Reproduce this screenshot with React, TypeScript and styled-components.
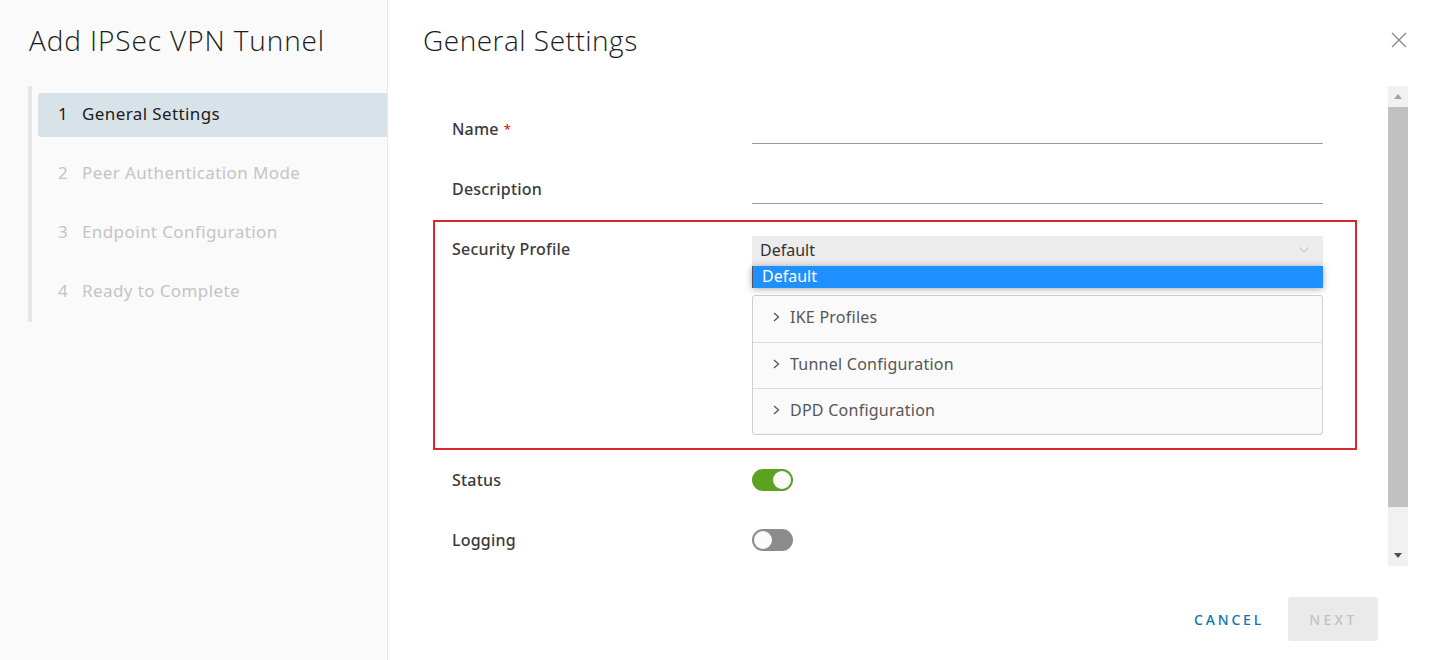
import React from "react";
import styled, { createGlobalStyle } from "styled-components";

const GlobalStyle = createGlobalStyle`
  html, body { margin: 0; padding: 0; background: #fff; }
  * { box-sizing: border-box; }
  body { font-family: "Noto Sans", "Open Sans", Arial, sans-serif; }
`;

const Page = styled.div`
  display: flex;
  width: 1429px;
  height: 660px;
  background: #fff;
  overflow: hidden;
`;

const Sidebar = styled.aside`
  width: 388px;
  flex: none;
  background: #fafafa;
  border-right: 1px solid #e8e8e8;
  padding: 22px 0 0 28px;
  display: flex;
  flex-direction: column;
`;

const Heading = styled.h1`
  margin: 0;
  font-family: "Open Sans", "Noto Sans", Arial, sans-serif;
  font-size: 28px;
  line-height: 36px;
  font-weight: 300;
  color: #1b1b1b;
  letter-spacing: 0.5px;
`;

const WizardTitle = styled(Heading)`
  margin-left: 1px;
  letter-spacing: 0.9px;
`;

const Nav = styled.nav`
  margin-top: 28px;
  border-left: 4px solid #e6e6e6;
  padding: 7px 0 8px 6px;
  display: flex;
  flex-direction: column;
  gap: 15px;
`;

const NavItem = styled.div<{ $active?: boolean }>`
  height: 44px;
  display: flex;
  align-items: center;
  padding: 0 0 3px 20px;
  border-radius: 3px 0 0 3px;
  background: ${(p) => (p.$active ? "#d8e3e9" : "transparent")};
  color: ${(p) => (p.$active ? "#1b1b1b" : "#c4c4c4")};
  font-size: 17px;
  letter-spacing: 0.4px;
`;

const StepNum = styled.span`
  width: 24px;
`;

const Main = styled.main`
  flex: 1;
  display: flex;
  flex-direction: column;
  padding: 22px 21px 0 35px;
`;

const Header = styled.header`
  display: flex;
  align-items: center;
  justify-content: space-between;
  height: 36px;
  flex: none;
`;

const CloseButton = styled.button`
  border: 0;
  background: none;
  padding: 0;
  margin-right: 1px;
  width: 16px;
  height: 16px;
  display: flex;
  cursor: pointer;
`;

const Body = styled.div`
  margin-top: 28px;
  height: 480px;
  flex: none;
  display: flex;
  overflow: hidden;
`;

const Form = styled.div`
  flex: 1;
  padding: 13px 0 0 10px;
  display: flex;
  flex-direction: column;
  overflow: hidden;
`;

const Row = styled.div`
  display: grid;
  grid-template-columns: 300px 571px;
  height: 60px;
  flex: none;
  padding-left: 19px;
`;

const HighlightRow = styled.div`
  display: grid;
  grid-template-columns: 300px 571px;
  align-items: start;
  flex: none;
  width: 924px;
  margin-top: 1px;
  border: 2px solid #d9272e;
  padding: 14px 0 13px 17px;
`;

const Label = styled.label<{ $tight?: boolean }>`
  font-size: 16px;
  font-weight: 500;
  color: #3a3a3a;
  letter-spacing: 0.2px;
  line-height: ${(p) => (p.$tight ? "26px" : "24px")};
  padding-top: ${(p) => (p.$tight ? "0" : "18px")};
`;

const Required = styled.span`
  color: #e02020;
  margin-left: 5px;
  font-size: 13px;
  vertical-align: top;
`;

const TextInput = styled.div`
  margin-top: 15px;
  height: 30px;
  border-bottom: 1px solid #9a9a9a;
`;

const SelectWrap = styled.div`
  display: flex;
  flex-direction: column;
  position: relative;
`;

const Select = styled.div`
  height: 30px;
  background: #ececec;
  padding: 0 14px 2px 8px;
  display: flex;
  align-items: center;
  justify-content: space-between;
  font-size: 16px;
  color: #333;
`;

const Popup = styled.div`
  position: absolute;
  top: 30px;
  left: 0;
  right: 0;
  height: 22px;
  line-height: 21px;
  padding-left: 9px;
  background: #1e90ff;
  color: #fff;
  font-size: 16px;
  border-left: 1px solid #555;
  box-shadow: 0 1px 7px rgba(0, 0, 0, 0.35);
`;

const Accordion = styled.div`
  margin-top: 29px;
  border: 1px solid #cfcfcf;
  border-radius: 3px;
  background: #fafafa;
`;

const Panel = styled.div`
  height: 46px;
  display: flex;
  align-items: center;
  gap: 9px;
  padding: 0 0 4px 19px;
  font-size: 16px;
  letter-spacing: 0.25px;
  color: #565656;
  & + & {
    border-top: 1px solid #dddddd;
  }
`;

const Toggle = styled.div<{ $on?: boolean }>`
  margin-top: 19px;
  width: 41px;
  height: 22px;
  border-radius: 11px;
  background: ${(p) => (p.$on ? "#5aa220" : "#8c8c8c")};
  display: flex;
  align-items: center;
  justify-content: ${(p) => (p.$on ? "flex-end" : "flex-start")};
  padding: 0 2px;
`;

const Knob = styled.div`
  width: 18px;
  height: 18px;
  border-radius: 50%;
  background: #fafafa;
`;

const Scrollbar = styled.div`
  width: 20px;
  flex: none;
  background: #f1f1f1;
  display: flex;
  flex-direction: column;
`;

const ScrollButton = styled.div`
  height: 21px;
  display: flex;
  align-items: center;
  justify-content: center;
`;

const Track = styled.div`
  flex: 1;
  display: flex;
  flex-direction: column;
`;

const Thumb = styled.div`
  height: 400px;
  background: #c1c1c1;
`;

const Footer = styled.footer`
  margin-top: 31px;
  display: flex;
  justify-content: flex-end;
  align-items: center;
  padding-right: 30px;
`;

const Button = styled.button<{ $primary?: boolean }>`
  height: 44px;
  border: 0;
  border-radius: 3px;
  font-family: inherit;
  font-size: 14px;
  font-weight: 500;
  letter-spacing: ${(p) => (p.$primary ? "3.4px" : "2.8px")};
  text-transform: uppercase;
  text-align: center;
  width: ${(p) => (p.$primary ? "90px" : "auto")};
  padding: ${(p) => (p.$primary ? "0 0 0 1px" : "0 10px 0 12px")};
  margin-left: ${(p) => (p.$primary ? "14px" : "0")};
  background: ${(p) => (p.$primary ? "#eaeaea" : "transparent")};
  color: ${(p) => (p.$primary ? "#c2c2c2" : "#0a77ad")};
  cursor: pointer;
`;

const Chevron = () => (
  <svg width="9" height="12" viewBox="0 0 9 12">
    <path d="M2 2 L6.5 6 L2 10" fill="none" stroke="#555" strokeWidth="1.3" />
  </svg>
);

const steps = [
  "General Settings",
  "Peer Authentication Mode",
  "Endpoint Configuration",
  "Ready to Complete",
];

export default function App() {
  return (
    <>
      <GlobalStyle />
      <Page>
        <Sidebar>
          <WizardTitle>Add IPSec VPN Tunnel</WizardTitle>
          <Nav>
            {steps.map((s, i) => (
              <NavItem key={s} $active={i === 0}>
                <StepNum>{i + 1}</StepNum>
                {s}
              </NavItem>
            ))}
          </Nav>
        </Sidebar>
        <Main>
          <Header>
            <Heading>General Settings</Heading>
            <CloseButton aria-label="Close">
              <svg width="16" height="16" viewBox="0 0 16 16">
                <path d="M1 1 L15 15 M15 1 L1 15" stroke="#8a8a8a" strokeWidth="1.4" />
              </svg>
            </CloseButton>
          </Header>
          <Body>
            <Form>
              <Row>
                <Label>
                  Name<Required>*</Required>
                </Label>
                <TextInput />
              </Row>
              <Row>
                <Label>Description</Label>
                <TextInput />
              </Row>
              <HighlightRow>
                <Label $tight>Security Profile</Label>
                <SelectWrap>
                  <Select>
                    Default
                    <svg width="10" height="6" viewBox="0 0 10 6">
                      <path d="M0.5 0.5 L5 5 L9.5 0.5" fill="none" stroke="#b5b5b5" strokeWidth="1" />
                    </svg>
                  </Select>
                  <Popup>Default</Popup>
                  <Accordion>
                    <Panel>
                      <Chevron />
                      IKE Profiles
                    </Panel>
                    <Panel>
                      <Chevron />
                      Tunnel Configuration
                    </Panel>
                    <Panel>
                      <Chevron />
                      DPD Configuration
                    </Panel>
                  </Accordion>
                </SelectWrap>
              </HighlightRow>
              <Row>
                <Label>Status</Label>
                <Toggle $on>
                  <Knob />
                </Toggle>
              </Row>
              <Row>
                <Label>Logging</Label>
                <Toggle>
                  <Knob />
                </Toggle>
              </Row>
            </Form>
            <Scrollbar>
              <ScrollButton>
                <svg width="8" height="5" viewBox="0 0 8 5">
                  <path d="M0 5 L4 0 L8 5 Z" fill="#a3a3a3" />
                </svg>
              </ScrollButton>
              <Track>
                <Thumb />
              </Track>
              <ScrollButton>
                <svg width="8" height="5" viewBox="0 0 8 5">
                  <path d="M0 0 L8 0 L4 5 Z" fill="#505050" />
                </svg>
              </ScrollButton>
            </Scrollbar>
          </Body>
          <Footer>
            <Button>Cancel</Button>
            <Button $primary disabled>
              Next
            </Button>
          </Footer>
        </Main>
      </Page>
    </>
  );
}
